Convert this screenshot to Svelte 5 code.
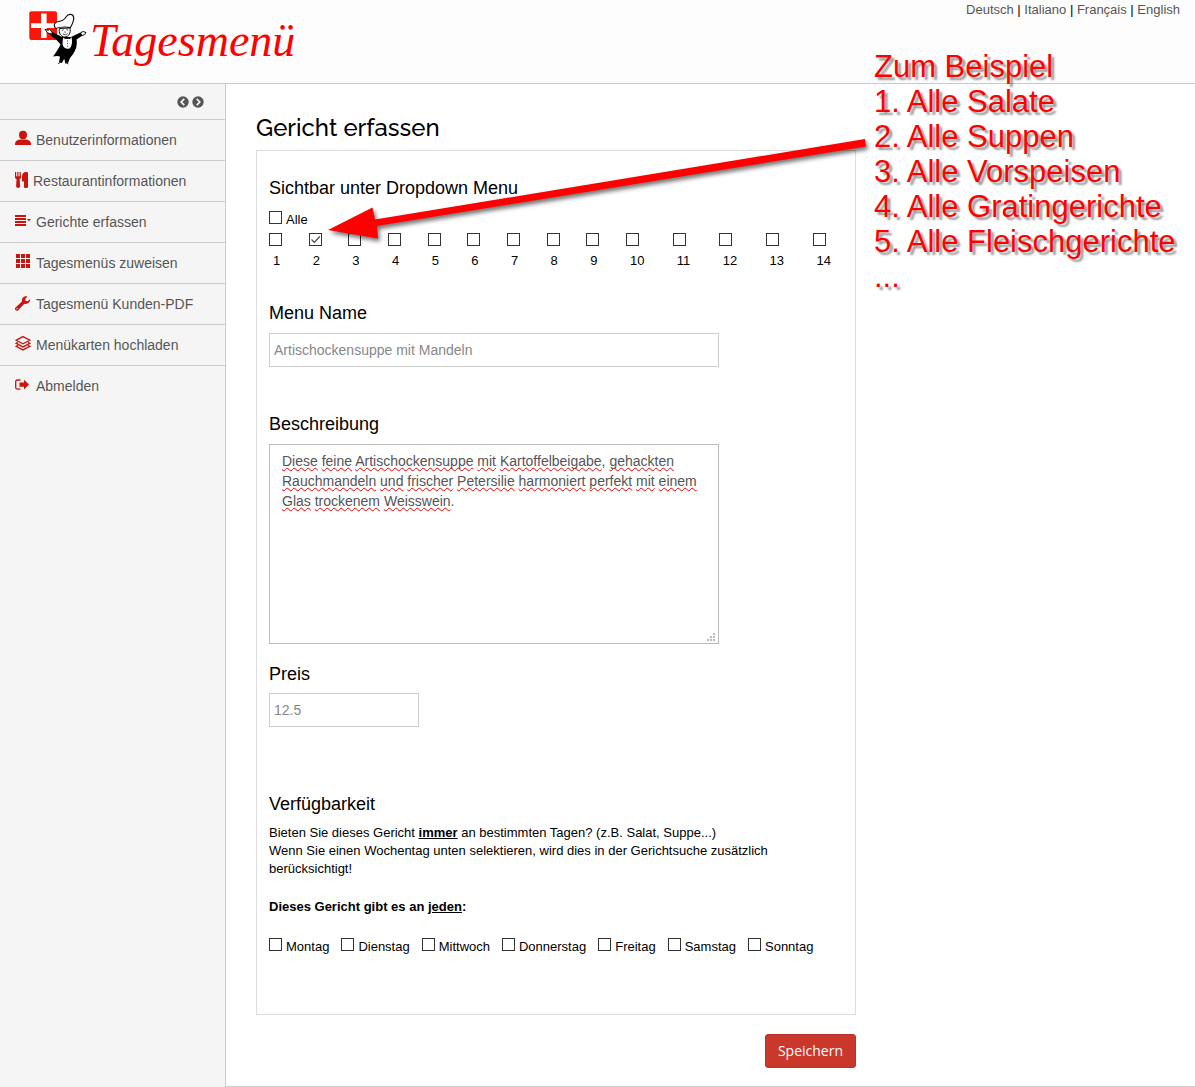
<script>
  const languages = ['Deutsch', 'Italiano', 'Français', 'English'];

  const menu = [
    { icon: 'user', label: 'Benutzerinformationen' },
    { icon: 'cutlery', label: 'Restaurantinformationen' },
    { icon: 'list', label: 'Gerichte erfassen' },
    { icon: 'grid', label: 'Tagesmenüs zuweisen' },
    { icon: 'wrench', label: 'Tagesmenü Kunden-PDF' },
    { icon: 'layers', label: 'Menükarten hochladen' },
    { icon: 'logout', label: 'Abmelden' }
  ];

  const days = ['Montag', 'Dienstag', 'Mittwoch', 'Donnerstag', 'Freitag', 'Samstag', 'Sonntag'];

  let all = $state(false);
  let categories = $state(Array.from({ length: 14 }, (_, i) => i === 1));
  let name = $state('Artischockensuppe mit Mandeln');
  let description = $state(
    'Diese feine Artischockensuppe mit Kartoffelbeigabe, gehackten Rauchmandeln und frischer Petersilie harmoniert perfekt mit einem Glas trockenem Weisswein.'
  );
  let price = $state('12.5');

  // Words and the separators between them, for the spelling marks
  const tokens = $derived(description.match(/[\p{L}]+|[^\p{L}]+/gu) ?? []);
  const isWord = (t) => /\p{L}/u.test(t);
</script>

<div class="page">
  <header>
    <a class="logo" href="#start">
      <svg class="chef" viewBox="28 9 60 58" aria-hidden="true">
        <rect x="29.3" y="11.3" width="27.7" height="28.6" rx="2" fill="#fc1609" />
        <path d="M41 13.4h5.6v9.9H56v4.6h-9.4V38H41V27.900H31v-4.600h10z" fill="#fff" />
        <path d="M55.500 28.500C53 25 54.300 22 58.500 21.500C63 21 64.500 19.500 66 17C68 13.800 72.800 13.400 73.600 17C74.400 21 72 24.500 70.300 27.600C65 26.500 60 27 55.500 28.500z" fill="#fff" stroke="#111" stroke-width="1.200" />
        <path d="M59.500 28.500C58.500 33 60.500 36.500 64.500 37C69 36.800 71 33 70 28z" fill="#fff" stroke="#111" stroke-width="1" />
        <path d="M62 30.500l1.600-.7M66.400 29.700l1.800.4M63 33.800c1.500 1.400 3.500 1.200 4.700-.5M64.800 31.500l.4 1.300" fill="none" stroke="#111" stroke-width=".8" />
        <path d="M50.500 31L62 37L71 37L80.500 32.500L82.500 35.500L76.600 39.500C77.500 45 76 50 72.800 54.500L70 58L67.800 63.500L65.300 63.500L64.300 58.800L61.800 63L59 62.500L60 56.500L57 56L53 56.500C56 52.500 59 48 60.500 44.500C58.500 41 53 37.500 49.500 34z" fill="#000" />
        <path d="M63.500 37.500L67.500 39L71.500 37.300C72.500 41 72.300 46 69.500 48.500C66.500 49.500 63.500 48 62.700 45C62.400 42 62.700 39.500 63.500 37.500z" fill="#fff" />
        <path d="M64.500 36.800l3 1.500l3-1.500v2.400l-3-1l-3 1z" fill="#080808" />
        <path d="M67.500 40.500v6.500" stroke="#333" stroke-width=".9" stroke-dasharray="1 1.600" />
        <path d="M51.500 34.300L47.500 32.700L45 29.400L48.200 30.300L49.500 29.300L52.300 32zM80.500 32.800L83 31.500L86 32.500L84.500 34.800L82 35.500z" fill="#fff" stroke="#111" stroke-width="1" />
        <path d="M58 63.800l2.400-1.600M66.500 62.500l2 1.600" stroke="#333" stroke-width="1" />
      </svg>
      <span class="wordmark">Tagesmenü</span>
    </a>
    <nav class="languages" aria-label="Sprache">
      {#each languages as language, i}{#if i > 0}{' | '}{/if}<a href="#{language}">{language}</a>{/each}
    </nav>
  </header>

  <div class="body">
    <aside>
      <div class="toggles">
        <button type="button" aria-label="Menü einklappen">
          <svg viewBox="0 0 12 12"><circle cx="6" cy="6" r="5.700" fill="#555" /><path d="M7.300 2.900L4.200 6l3.100 3.100" fill="none" stroke="#f5f5f5" stroke-width="1.700" /></svg>
        </button>
        <button type="button" aria-label="Menü ausklappen">
          <svg viewBox="0 0 12 12"><circle cx="6" cy="6" r="5.700" fill="#555" /><path d="M4.700 2.900L7.800 6L4.700 9.100" fill="none" stroke="#f5f5f5" stroke-width="1.700" /></svg>
        </button>
      </div>
      <nav aria-label="Hauptmenü">
        {#each menu as item}
          <a class="item" href="#{item.icon}">
            <svg class="icon" class:narrow={item.icon === 'cutlery'} viewBox={item.icon === 'cutlery' ? '0 0 13 20' : '0 0 16 20'} aria-hidden="true">
              {#if item.icon === 'user'}
                <ellipse cx="8" cy="5" rx="4" ry="4.200" />
                <path d="M0 15v-1.500C.3 11 3 9.800 5.500 9.600h5C13 9.800 15.700 11 16 13.500V15z" />
              {:else if item.icon === 'cutlery'}
                <path d="M0 1h1v4.300h.8V1h.9v4.300h.8V1h.9v4.300h.8V1H6v5.200c0 1-.5 1.600-1.300 1.900l.4 7.200c0 2.200-4 2.200-4 0l.4-7.200C.5 7.800 0 7.200 0 6.200zM13 1.500v14.700c0 1.100-4 1.100-4 0v-5.700H7V5.500C7 2.500 9.500 0 13 1.500z" />
              {:else if item.icon === 'list'}
                <path d="M0 3h11v2H0zM0 6h11v2H0zM0 9h11v2H0zM0 12h11v2H0zM12 7h4l-2 2.300z" />
              {:else if item.icon === 'grid'}
                <path d="M1 1h4v4H1zM6 1h4v4H6zM11 1h4v4h-4zM1 6h4v4H1zM6 6h4v4H6zM11 6h4v4h-4zM1 11h4v4H1zM6 11h4v4H6zM11 11h4v4h-4z" />
              {:else if item.icon === 'wrench'}
                <path fill-rule="evenodd" d="M12.600 2.500L10.200 4.900L10.500 6.900L12.500 7.300L15 5.200C15.400 8.500 12.500 10.700 9.300 9.700L3.200 16.200C1.400 17.800-1.100 15.500.5 13.500L7 7.500C6 4.300 9 1.400 12.600 2.500zM2 14a.6.6 0 1 0 .01 0z" />
              {:else if item.icon === 'layers'}
                <path class="line" d="M8 1.600l6.800 3.600L8 8.800L1.200 5.200zM3 7.300L1.200 8.300L8 11.900l6.800-3.600L13 7.300M3 10.300l-1.800 1L8 14.900l6.800-3.600l-1.800-1" />
              {:else}
                <path class="line" d="M5.500 4H2.500C1.300 4 .7 4.700.7 5.800v5.600c0 1.100.6 1.800 1.800 1.800h3" />
                <path d="M4.500 6.400H9V3.800l5 4.800l-5 4.800v-2.600H4.500z" />
              {/if}
            </svg>
            {item.label}
          </a>
        {/each}
      </nav>
    </aside>

    <main>
      <h1>Gericht erfassen</h1>
      <form onsubmit={(e) => e.preventDefault()}>
        <div class="panel">
          <h2>Sichtbar unter Dropdown Menu</h2>
          <label class="check all"><input type="checkbox" bind:checked={all} />Alle</label>
          <div class="categories">
            {#each categories as _, i}
              <label class="category"><input type="checkbox" bind:checked={categories[i]} /><span>{i + 1}</span></label>
            {/each}
          </div>

          <label class="heading" for="name">Menu Name</label>
          <input class="text name" id="name" type="text" bind:value={name} />

          <label class="heading" for="description">Beschreibung</label>
          <div class="editor">
            <div class="marks" aria-hidden="true">{#each tokens as token}{#if isWord(token)}<span>{token}</span>{:else}{token}{/if}{/each}</div>
            <textarea id="description" spellcheck="false" bind:value={description}></textarea>
            <svg class="grip" viewBox="0 0 8 8" aria-hidden="true"><path d="M6 0h2v2H6zM3 3h2v2H3zM6 3h2v2H6zM0 6h2v2H0zM3 6h2v2H3zM6 6h2v2H6z" /></svg>
          </div>

          <label class="heading" for="price">Preis</label>
          <input class="text price" id="price" type="text" bind:value={price} />

          <h2>Verfügbarkeit</h2>
          <p>
            Bieten Sie dieses Gericht <b><u>immer</u></b> an bestimmten Tagen? (z.B. Salat, Suppe...)<br />
            Wenn Sie einen Wochentag unten selektieren, wird dies in der Gerichtsuche zusätzlich berücksichtigt!
          </p>
          <p class="every"><b>Dieses Gericht gibt es an <u>jeden</u>:</b></p>
          <div class="days">
            {#each days as day}
              <label class="check"><input type="checkbox" />{day}</label>
            {/each}
          </div>
        </div>
        <div class="actions"><button class="save" type="submit">Speichern</button></div>
      </form>
    </main>
  </div>

  <svg class="arrow" viewBox="0 0 560 120" aria-hidden="true">
    <path d="M8 100L52.500 77.500L55 89.500L545 9L546 16.500L57 96L58 108.500z" />
  </svg>
  <div class="note">
    Zum Beispiel<br />1. Alle Salate<br />2. Alle Suppen<br />3. Alle Vorspeisen<br />4. Alle Gratingerichte<br />5. Alle Fleischgerichte<br />...
  </div>
</div>

<style>
  :global(body) {
    background: #fff;
  }
  .page {
    position: relative;
    display: flex;
    flex-direction: column;
    min-height: 100vh;
    font: 13px/18px 'Liberation Sans', Arial, sans-serif;
    color: #000;
  }
  .page :global(*) {
    box-sizing: border-box;
  }
  a {
    color: #555;
    text-decoration: none;
  }
  button {
    cursor: pointer;
  }

  header {
    display: flex;
    justify-content: space-between;
    align-items: flex-start;
    height: 84px;
    padding: 0 15px 0 28px;
    background: #fdfdfd;
    border-bottom: 1px solid #ccc;
  }
  .logo {
    display: flex;
    gap: 2px;
    padding-top: 9px;
  }
  .languages {
    padding-top: 1px;
  }
  .chef {
    width: 60px;
    height: 58px;
  }
  .wordmark {
    font: italic 46px/64px 'Brush Script MT', 'Liberation Serif', serif;
    color: #f00;
  }

  .body {
    flex: 1;
    display: flex;
  }
  aside {
    flex: none;
    width: 226px;
    background: #f5f5f5;
    border-right: 1px solid #ccc;
  }
  .toggles {
    display: flex;
    justify-content: flex-end;
    align-items: center;
    gap: 3px;
    height: 36px;
    padding-right: 21px;
    border-bottom: 1px solid #ccc;
  }
  .toggles button {
    display: flex;
    padding: 0;
    border: 0;
    background: none;
  }
  .toggles svg {
    width: 12px;
    height: 12px;
  }
  .item {
    display: flex;
    align-items: center;
    gap: 5px;
    height: 41px;
    padding-left: 15px;
    border-bottom: 1px solid #ccc;
    font-size: 14px;
    line-height: 20px;
  }
  .item:last-child {
    border-bottom-color: transparent;
  }
  .icon {
    width: 16px;
    height: 20px;
    fill: #c9150e;
  }
  .icon.narrow {
    width: 13px;
  }
  .icon .line {
    fill: none;
    stroke: #c9150e;
    stroke-width: 1.3;
  }

  main {
    flex: 1;
    padding: 29px 30px 18px;
    border-bottom: 1px solid #ccc;
  }
  h1 {
    margin: 0 0 7px;
    font: 500 24px/30px Raleway, Lato, sans-serif;
  }
  form {
    max-width: 600px;
  }
  .panel {
    padding: 27px 12px 58px;
    border: 1px solid #ddd;
  }
  h2,
  .heading {
    display: block;
    margin: 0;
    font-size: 18px;
    font-weight: 400;
    line-height: 20px;
  }
  input[type='checkbox'] {
    flex: none;
    appearance: none;
    display: block;
    width: 13px;
    height: 13px;
    margin: 0;
    border: 1px solid #333;
    background: #fff;
  }
  input[type='checkbox']:checked {
    background: url("data:image/svg+xml,%3Csvg xmlns='http://www.w3.org/2000/svg' viewBox='0 0 11 11'%3E%3Cpath d='M1.500 5.500L4.300 8.300L9.800 2.500' fill='none' stroke='%23444' stroke-width='1.200'/%3E%3C/svg%3E");
  }
  .check {
    display: flex;
    gap: 4px;
  }
  .all {
    margin-top: 13px;
    align-items: flex-start;
  }
  .categories {
    display: flex;
    justify-content: space-between;
    max-width: 562px;
    margin: 4px 0 33px;
  }
  .category {
    display: flex;
    flex-direction: column;
    gap: 6px;
    width: min-content;
  }
  .category input {
    margin-right: -13px;
  }
  .category span {
    padding-left: 4px;
  }
  .text {
    display: block;
    width: 100%;
    height: 34px;
    margin: 10px 0 0;
    padding: 0 4px;
    border: 1px solid #ccc;
    background: #fff;
    font: 14px/20px 'Liberation Sans', Arial, sans-serif;
    color: #888;
  }
  .name {
    max-width: 450px;
    margin-bottom: 47px;
  }
  .price {
    max-width: 150px;
    margin-top: 9px;
    margin-bottom: 67px;
  }
  .editor {
    position: relative;
    max-width: 450px;
    height: 200px;
    margin: 10px 0 20px;
  }
  .marks,
  textarea {
    display: block;
    width: 100%;
    height: 100%;
    margin: 0;
    padding: 6px 12px;
    border: 1px solid #bbb;
    font: 14px/20px 'Liberation Sans', Arial, sans-serif;
    white-space: pre-wrap;
  }
  .marks {
    position: absolute;
    inset: 0;
    border-color: transparent;
    color: transparent;
    pointer-events: none;
  }
  .marks span {
    text-decoration: underline wavy #e00 1px;
    text-decoration-skip-ink: none;
    text-underline-offset: 1px;
  }
  textarea {
    resize: none;
    background: #fff;
    color: #555;
  }
  .grip {
    position: absolute;
    right: 4px;
    bottom: 3px;
    width: 8px;
    height: 8px;
    fill: #bbb;
  }
  p {
    margin: 10px 0 0;
  }
  p.every {
    margin: 20px 0 22px;
  }
  .days {
    display: flex;
    flex-wrap: wrap;
    gap: 12px;
  }
  .actions {
    display: flex;
    justify-content: flex-end;
    margin-top: 19px;
  }
  .save {
    height: 34px;
    padding: 0 12px;
    border: 1px solid #b8322a;
    border-radius: 3px;
    background: #c9382b;
    color: #fff;
    font: 14px/20px 'Open Sans', sans-serif;
  }

  .arrow {
    position: absolute;
    left: 320px;
    top: 130px;
    width: 560px;
    height: 120px;
    fill: #f00;
    filter: drop-shadow(2px 3px 2px rgba(0, 0, 0, 0.55));
    pointer-events: none;
  }
  .note {
    position: absolute;
    left: 874px;
    top: 49px;
    font-size: 31px;
    line-height: 35px;
    white-space: nowrap;
    color: #f00;
    text-shadow: 3px 3px 2px rgba(0, 0, 0, 0.4);
    pointer-events: none;
  }
</style>
